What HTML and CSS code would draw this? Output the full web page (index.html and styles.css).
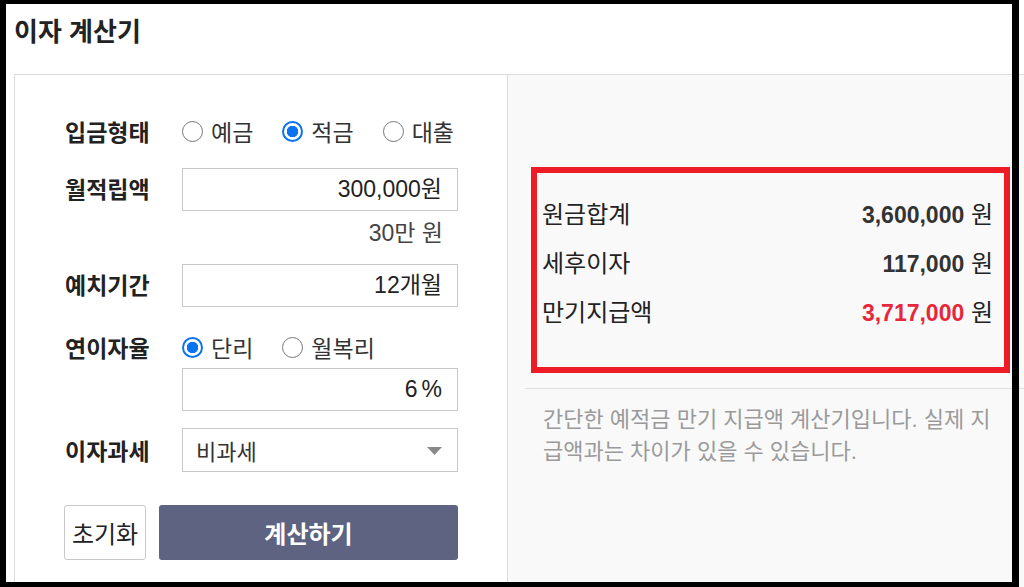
FILE: index.html
```
<!DOCTYPE html>
<html lang="ko">
<head>
<meta charset="utf-8">
<title>이자 계산기</title>
<link rel="stylesheet" href="styles.css">
</head>
<body>
<div class="page">
  <h1 class="title">이자 계산기</h1>
  <div class="panel">
    <div class="form">
      <div class="row row-type">
        <div class="label">입금형태</div>
        <div class="radios">
          <label class="opt"><span class="radio"></span>예금</label>
          <label class="opt"><span class="radio on"></span>적금</label>
          <label class="opt"><span class="radio"></span>대출</label>
        </div>
      </div>
      <div class="row row-amount">
        <div class="label label-box">월적립액</div>
        <div class="ctrl">
          <div class="box">300,000원</div>
          <div class="hint">30만 원</div>
        </div>
      </div>
      <div class="row row-period">
        <div class="label label-box">예치기간</div>
        <div class="ctrl">
          <div class="box">12개월</div>
        </div>
      </div>
      <div class="row row-rate">
        <div class="label">연이자율</div>
        <div class="ctrl">
          <div class="radios">
            <label class="opt"><span class="radio on"></span>단리</label>
            <label class="opt"><span class="radio"></span>월복리</label>
          </div>
          <div class="box box-rate">6<span class="unit">%</span></div>
        </div>
      </div>
      <div class="row row-tax">
        <div class="label label-select">이자과세</div>
        <div class="ctrl">
          <div class="select">
            <span>비과세</span>
            <svg class="caret" width="15" height="8" viewBox="0 0 15 8"><path d="M0 0H15L7.5 8Z" fill="#8a8a8a"/></svg>
          </div>
        </div>
      </div>
      <div class="buttons">
        <button class="btn btn-reset">초기화</button>
        <button class="btn btn-calc">계산하기</button>
      </div>
    </div>
    <div class="side">
      <div class="result">
        <div class="res-row"><span class="res-name">원금합계</span><span class="res-val"><b>3,600,000</b> 원</span></div>
        <div class="res-row"><span class="res-name">세후이자</span><span class="res-val"><b>117,000</b> 원</span></div>
        <div class="res-row"><span class="res-name">만기지급액</span><span class="res-val"><b class="red">3,717,000</b> 원</span></div>
      </div>
      <div class="divider"></div>
      <p class="desc">간단한 예적금 만기 지급액 계산기입니다. 실제 지급액과는 차이가 있을 수 있습니다.</p>
    </div>
  </div>
</div>
<div class="frame"></div>
</body>
</html>
```
FILE: styles.css
```
* { box-sizing: border-box; }
html, body { margin: 0; padding: 0; }
body {
  width: 1024px;
  height: 587px;
  overflow: hidden;
  position: relative;
  background: #fff;
  font-family: "Liberation Sans", "Noto Sans CJK KR", sans-serif;
  color: #222;
}
.page {
  padding-left: 14px;
  height: 587px;
  display: flex;
  flex-direction: column;
}
.title {
  margin: 0;
  height: 74px;
  padding-top: 12px;
  font-family: "Noto Sans CJK KR", sans-serif;
  font-size: 26px;
  line-height: 36px;
  font-weight: 700;
  color: #222;
}
.panel {
  flex: 1;
  display: flex;
  border-top: 1px solid #dcdcdc;
  border-left: 1px solid #dcdcdc;
  width: 1030px;
}
.form {
  width: 493px;
  flex: none;
  background: #fff;
  border-right: 1px solid #dcdcdc;
  padding: 41px 0 0 49px;
}
.row {
  display: grid;
  grid-template-columns: 118px 276px;
  align-items: start;
}
.label {
  font-family: "Noto Sans CJK KR", sans-serif;
  font-weight: 700;
  font-size: 23px;
  line-height: 30px;
  color: #222;
  padding-left: 1px;
}
.label-box { line-height: 41px; }
.label-select { line-height: 44px; }
.radios {
  display: flex;
  align-items: center;
  height: 30px;
  gap: 29px;
  font-size: 23px;
  color: #333;
}
.opt {
  display: flex;
  align-items: center;
  gap: 8px;
}
.radio {
  width: 21px;
  height: 21px;
  border: 1px solid #767676;
  border-radius: 50%;
  background: #fff;
  flex: none;
}
.radio.on {
  border: 2px solid #0b73f0;
  background: radial-gradient(circle, #0b73f0 0 5.5px, #fff 6px);
}
.row-amount { margin-top: 22px; }
.box {
  height: 43px;
  border: 1px solid #c9c9c9;
  background: #fff;
  text-align: right;
  padding-right: 15px;
  font-size: 23px;
  line-height: 41px;
  color: #222;
}
.unit { margin-left: 4px; }
.hint {
  margin-top: 7px;
  height: 30px;
  line-height: 30px;
  text-align: right;
  padding-right: 15px;
  font-size: 23px;
  color: #444;
}
.row-period { margin-top: 16px; }
.row-rate { margin-top: 25px; }
.box-rate { margin-top: 6px; }
.row-tax { margin-top: 17px; }
.select {
  height: 44px;
  border: 1px solid #c9c9c9;
  background: #fff;
  display: flex;
  align-items: center;
  justify-content: space-between;
  padding: 0 15px 0 13px;
  font-size: 22px;
  color: #333;
}
.caret { margin-top: 2px; }
.buttons {
  margin-top: 33px;
  display: flex;
  gap: 13px;
  width: 394px;
}
.btn {
  height: 55px;
  font-family: "Noto Sans CJK KR", sans-serif;
  font-size: 24px;
  border-radius: 3px;
  padding: 0;
  cursor: pointer;
}
.btn-reset {
  width: 82px;
  background: #fff;
  border: 1px solid #c9c9c9;
  color: #222;
}
.btn-calc {
  flex: 1;
  background: #5d6381;
  border: none;
  color: #fff;
  font-weight: 700;
}
.side {
  flex: 1;
  background: #f9f9f9;
  padding: 92px 0 0 17px;
}
.result {
  margin-left: 6px;
  width: 479px;
  height: 206px;
  border: 6px solid #ed1c24;
  padding: 17px 11px 0 5px;
}
.res-row {
  display: flex;
  justify-content: space-between;
  height: 49px;
  line-height: 49px;
  font-size: 24px;
  color: #222;
}
.res-val b { font-weight: 700; color: #333; font-size: 23px; }
.res-val b.red { color: #e8263a; }
.divider {
  margin-top: 15px;
  height: 1px;
  background: #e0e0e0;
}
.desc {
  margin: 15px 0 0 18px;
  width: 455px;
  font-size: 22px;
  line-height: 32px;
  color: #9a9a9a;
}
.frame {
  position: absolute;
  left: 0;
  top: 0;
  width: 1019px;
  height: 587px;
  border-style: solid;
  border-color: #000;
  border-width: 4px 7px 5px 6px;
  pointer-events: none;
}
```
